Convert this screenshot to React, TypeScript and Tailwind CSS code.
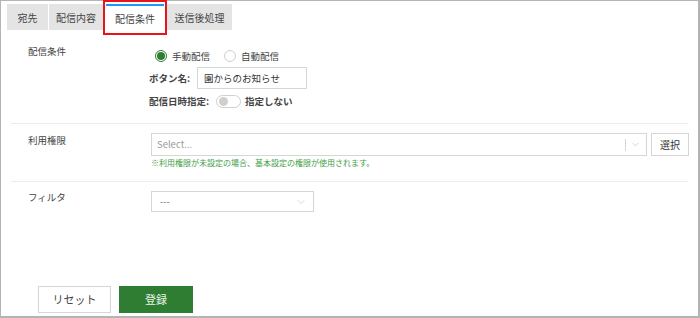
import { ChevronDown } from "lucide-react";

const font = { fontFamily: '"Noto Sans CJK JP", "Noto Sans", sans-serif' };

function Radio({ checked, label }: { checked?: boolean; label: string }) {
  return (
    <label className="flex items-center gap-[5px]">
      <span
        className={
          "flex h-[12px] w-[12px] items-center justify-center rounded-full border " +
          (checked ? "border-[#2e7d32]" : "border-[#cfcfcf]")
        }
      >
        {checked && <span className="h-[8px] w-[8px] rounded-full bg-[#2e7d32]" />}
      </span>
      <span>{label}</span>
    </label>
  );
}

export default function App() {
  return (
    <div
      className="h-[318px] w-[700px] border border-r-2 border-b-2 border-[#b4b4b4] bg-white text-[9.5px] text-[#444]"
      style={font}
    >
      {/* tabs */}
      <div className="flex pl-[6px] pt-[3px] text-[10px]">
        <div className="flex h-[26px] w-[41px] items-center justify-center bg-[#e4e4e4]">宛先</div>
        <div className="ml-[1px] flex h-[26px] w-[54px] items-center justify-center bg-[#e4e4e4]">配信内容</div>
        <div className="relative h-[26px] w-[64px] px-[3px]">
          <div className="flex h-[26px] items-center justify-center border-t-2 border-[#2196f3] bg-white">配信条件</div>
          <div className="absolute -top-[4px] -bottom-[5px] left-0 right-0 border-2 border-[#e8141c]" />
        </div>
        <div className="flex h-[26px] w-[65px] items-center justify-center bg-[#e4e4e4]">送信後処理</div>
      </div>

      {/* 配信条件 */}
      <div className="flex px-[27px] pt-[15px] pb-[15px]">
        <div className="w-[121px] leading-[12px]">配信条件</div>
        <div className="flex flex-col pt-[4px]">
          <div className="flex h-[14px] items-center gap-[14px] pl-[6px]">
            <Radio checked label="手動配信" />
            <Radio label="自動配信" />
          </div>
          <div className="mt-[4px] flex items-center gap-[7px] font-bold">
            <span>ボタン名:</span>
            <div className="flex h-[22px] w-[110px] items-center border border-[#d6d6d6] px-[6px] font-normal text-[#333]">
              園からのお知らせ
            </div>
          </div>
          <div className="mt-[5px] flex h-[14px] items-center gap-[4px] font-bold">
            <span className="mr-[3px]">配信日時指定:</span>
            <span className="flex h-[13px] w-[25px] items-center rounded-full border border-[#d0d0d0] px-[2px]">
              <span className="h-[9px] w-[9px] rounded-full bg-[#cfcfcf]" />
            </span>
            <span>指定しない</span>
          </div>
        </div>
      </div>

      <div className="mx-[10px] h-[1px] bg-[#ececec]" />

      {/* 利用権限 */}
      <div className="flex pl-[27px] pr-[9px] pb-[13px]">
        <div className="w-[123px] pt-[10px] leading-[12px]">利用権限</div>
        <div className="flex flex-1 flex-col pt-[9px]">
          <div className="flex gap-[4px]">
            <div className="flex h-[23px] flex-1 items-center border border-[#d6d6d6] pl-[5px] pr-[5px]">
              <span className="flex-1 text-[#999]">Select...</span>
              <span className="mr-[4px] h-[12px] w-[1px] bg-[#d6d6d6]" />
              <ChevronDown size={11} strokeWidth={1.3} color="#b8b8b8" />
            </div>
            <div className="flex h-[23px] w-[38px] items-center justify-center border border-[#d6d6d6] text-[10px] text-[#333]">
              選択
            </div>
          </div>
          <div className="mt-[2px] text-[8px] leading-[10px] text-[#43a047]">
            ※利用権限が未設定の場合、基本設定の権限が使用されます。
          </div>
        </div>
      </div>

      <div className="mx-[10px] h-[1px] bg-[#ececec]" />

      {/* フィルタ */}
      <div className="flex px-[27px]">
        <div className="w-[123px] pt-[9px] leading-[12px]">フィルタ</div>
        <div className="pt-[9px]">
          <div className="flex h-[21px] w-[163px] items-center border border-[#d6d6d6] pl-[8px] pr-[6px]">
            <span className="flex-1 text-[#777]">---</span>
            <ChevronDown size={12} strokeWidth={1.2} color="#c0c0c0" />
          </div>
        </div>
      </div>

      {/* buttons */}
      <div className="flex gap-[8px] px-[37px] pt-[74px]">
        <button className="h-[27px] w-[73px] border border-[#d6d6d6] bg-white text-[11px] text-[#444]">
          リセット
        </button>
        <button className="h-[27px] w-[74px] bg-[#2e7d32] text-[11px] text-[#e8f5e9]">登録</button>
      </div>
    </div>
  );
}
